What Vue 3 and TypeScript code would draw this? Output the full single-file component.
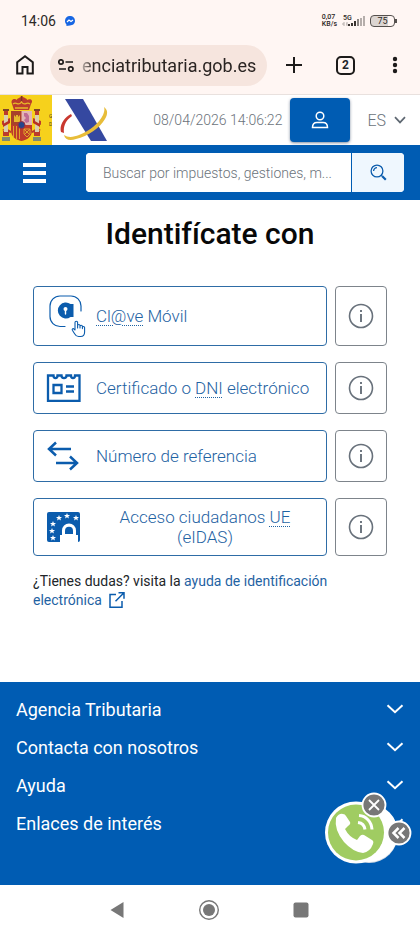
<script setup lang="ts">
import { ref } from 'vue'

interface Method {
  id: string
  before: string
  abbr: string
  title: string
  after: string
  size: string
}

const methods: Method[] = [
  { id: 'clave', before: '', abbr: 'Cl@ve', title: 'Cl@ve', after: ' Móvil', size: 'tall' },
  { id: 'cert', before: 'Certificado o ', abbr: 'DNI', title: 'Documento Nacional de Identidad', after: ' electrónico', size: 'normal' },
  { id: 'ref', before: 'Número de referencia', abbr: '', title: '', after: '', size: 'normal' },
  { id: 'eidas', before: 'Acceso ciudadanos ', abbr: 'UE', title: 'Unión Europea', after: ' (eIDAS)', size: 'centered' },
]

const sections: string[] = ['Agencia Tributaria', 'Contacta con nosotros', 'Ayuda', 'Enlaces de interés']
const stars: number[][] = [[12, 5], [20, 3], [29, 5], [6, 11], [5, 18], [6, 25]]

const query = ref('')
const address = ref('enciatributaria.gob.es')
</script>

<template>
  <div class="screen">
    <div class="status">
      <span class="clock">14:06</span>
      <svg class="messenger" width="10" height="10" viewBox="0 0 10 10">
        <path d="M5 0a4.8 4.8 0 0 1 5 4.7c0 2.8-2.2 4.7-5 4.7L3 9.8l-1.5.1-.1-1.5A4.7 4.7 0 0 1 0 4.7 4.8 4.8 0 0 1 5 0Z" fill="#1766e3" />
        <path d="m2 6 2-2 2 1.5L8 4" fill="none" stroke="#fff" stroke-width="1.2" />
      </svg>
      <span class="speed"><span>0,07</span><span>KB/s</span></span>
      <span class="signal">
        <span class="net">5G</span>
        <svg width="24" height="11" viewBox="0 0 24 11">
          <path d="M1 8h2m0-2v4m2-2h1m0-2v4" stroke="#b5aeab" stroke-width="1" />
          <path d="M8 10V8m3 2V7m3 3V5" stroke="#38322f" stroke-width="2" />
          <path d="M17 10V3m0 7" stroke="#8b8582" stroke-width="2" />
          <path d="M20 10V2m3 8V0" stroke="#b5aeab" stroke-width="2" />
        </svg>
      </span>
      <span class="battery"><span>75</span></span>
    </div>

    <div class="browser">
      <button class="plain" aria-label="Inicio">
        <svg width="18" height="20" viewBox="0 0 18 20" fill="none" stroke="#1d1b1a" stroke-width="2">
          <path d="M1.2 18.5V7.3L9 1.3l7.800 6V18.500H11.500V12H6.500v6.500Z" />
        </svg>
      </button>
      <label class="address">
        <svg width="16" height="13" viewBox="0 0 16 13" fill="none" stroke="#1d1b1a" stroke-width="1.700">
          <circle cx="3" cy="3" r="2.200" /><path d="M7.500 3H15M1 10h7" /><circle cx="12.800" cy="10" r="2.200" />
        </svg>
        <input v-model="address" type="text" aria-label="Dirección web" />
      </label>
      <button class="plain plus" aria-label="Nueva pestaña">
        <svg width="18" height="18" viewBox="0 0 18 18"><path d="M9 1v16M1 9h16" stroke="#1d1b1a" stroke-width="2" /></svg>
      </button>
      <button class="plain tabs" aria-label="Pestañas"><span>2</span></button>
      <button class="plain dots" aria-label="Menú del navegador">
        <svg width="6" height="18" viewBox="0 0 6 18" fill="#1d1b1a"><circle cx="3" cy="3" r="2.200" /><circle cx="3" cy="9" r="2.200" /><circle cx="3" cy="15" r="2.200" /></svg>
      </button>
    </div>

    <header class="site">
      <a class="crest" href="#" aria-label="Gobierno de España">
        <svg width="52" height="50" viewBox="0 0 52 50">
          <rect width="52" height="50" fill="#f6d11c" />
          <g fill="#bb3b2c">
            <path d="M12 9c-2-5 3-6 5-4 0-2 3-2 4-3 0-1 2-1 2 0 1 1 4 1 4 3 3-2 7 0 4 4l-2 6H14Z" />
            <path d="M4 16h4v4H4zM35 16h4v4h-4zM3 36h6v5H3zM34 36h6v5h-6z" />
            <path d="m2 26 8-3v3l-8 4zM41 26l-8-3v3l8 4zM2 35l4-2 5 3v2zM41 35l-4-2-5 3v2z" />
          </g>
          <path d="M4 20h4v17H4zM35 20h4v17h-4z" fill="#d9cfae" />
          <path d="m3 29 7-4v3l-7 4zm37 0-7-4v3l7 4z" fill="#b83124" />
          <path d="M2 42h8v4H2zm31 0h8v4h-8z" fill="#7d8a72" />
          <path d="M11 16h21v19c0 7-5 10-10.500 11C16 45 11 42 11 35Z" fill="#be3b2a" />
          <path d="M11 16h10.500v14H11z" fill="#a8412a" />
          <path d="M21.500 16H32v14H21.500z" fill="#e2b6b4" />
          <path d="M24 18h3l2 3v6l-3 1-2-3 2-2-2-2z" fill="#bf6b94" />
          <path d="M14 27v-7l2 2v-2h2v2l2-2v7z" fill="#e6b72d" />
          <path d="M13.500 31v11m3-11v13m3-11v11" stroke="#e0a52b" />
          <path d="M24 34h6v5l-3 3-3-3zm0 0 6 6m0-6-6 6" stroke="#e0a52b" fill="none" />
          <circle cx="21.500" cy="30" r="3.500" fill="#26458c" stroke="#9a3143" />
          <path d="M13 9c4-3 5 3 8.500-2C25 12 26 6 30 9M15 13h13" fill="none" stroke="#e7b929" stroke-width="1.300" />
          <path d="M21.500 1v5" stroke="#7f3720" stroke-width="1.500" />
          <path d="M3 15h6m25 0h6" stroke="#7e4428" stroke-width="2" />
          <text x="49" y="23" font-size="5" fill="#493e18">G</text>
          <text x="49" y="31" font-size="5" fill="#493e18">D</text>
        </svg>
      </a>
      <a class="logo" href="#" aria-label="Agencia Tributaria">
        <svg width="48" height="44" viewBox="0 0 48 44">
          <path d="M5 1h18l24 42H31Z" fill="#3548a0" />
          <path d="M11 16C4 19-1 28 1 34l3 1C3 28 6 22 12 18Z" fill="#c9382f" />
          <path d="M44 9c4 3 4 7 1 12-5 9-17 17-29 20-6 2-11 1-12-4 4 3 10 2 15 0 11-4 20-12 24-20 1-3 2-5 1-8Z" fill="#e8bd39" />
        </svg>
      </a>
      <time class="date">08/04/2026 14:06:22</time>
      <button class="user" aria-label="Acceder">
        <svg width="18" height="18" viewBox="0 0 18 18" fill="none" stroke="#fff" stroke-width="1.500">
          <circle cx="9" cy="5" r="3.800" /><path d="M1.500 16.500c0-3.500 2-5 4.500-5h6c2.500 0 4.500 1.500 4.500 5Z" />
        </svg>
      </button>
      <button class="plain lang">
        ES
        <svg width="12" height="8" viewBox="0 0 12 8" fill="none" stroke="#5f6872" stroke-width="1.700"><path d="m1 1.200 5 5.200 5-5.200" /></svg>
      </button>
    </header>

    <nav class="bar">
      <button class="plain burger" aria-label="Menú"><i></i><i></i><i></i></button>
      <form class="search" role="search" @submit.prevent>
        <input v-model="query" type="text" placeholder="Buscar por impuestos, gestiones, m..." aria-label="Buscar" />
        <button aria-label="Buscar">
          <svg width="17" height="17" viewBox="0 0 17 17" fill="none" stroke="#0b5cad" stroke-width="1.300">
            <circle cx="7" cy="7" r="5.900" /><path d="M3.600 7A3.400 3.400 0 0 1 7 3.600" /><path d="m11.300 11.300 1.200 1.200" /><path d="m12.300 12.300 3.500 3.500" stroke-width="2.200" />
          </svg>
        </button>
      </form>
    </nav>

    <main>
      <h1>Identifícate con</h1>
      <div class="methods">
        <div v-for="m in methods" :key="m.id" class="row">
          <button class="method" :class="m.size">
            <svg v-if="m.id === 'clave'" class="icon" width="40" height="44" viewBox="0 0 40 44" fill="none" stroke="#0b5cad" stroke-linecap="round" stroke-linejoin="round">
              <path d="M19 32.500h-5a10 10 0 0 1-10-10V12A10 10 0 0 1 14 2h11a10 10 0 0 1 10 10v5" stroke-width="1.200" />
              <path d="M27.500 10v13h-3a8 8 0 1 1 0-13Z" fill="#0b5cad" stroke="none" />
              <circle cx="19.500" cy="15" r="2" fill="#fff" stroke="none" /><path d="M19.500 16v4" stroke="#fff" stroke-width="1.400" />
              <path d="M29 36V28.500a1.300 1.300 0 0 1 2.600 0V34v-2.300a1.200 1.200 0 0 1 2.400 0V34v-1.600a1.200 1.200 0 0 1 2.400 0v2.200-1a1.100 1.100 0 0 1 2.200 0V38c0 3-1.600 4.500-4 4.500h-2c-2 0-3-1-4-2.800l-2.200-3.500c-.7-1.300.9-2.200 1.700-1Z" stroke-width="1.100" />
            </svg>
            <svg v-else-if="m.id === 'cert'" class="icon" width="40" height="30" viewBox="0 0 40 30" fill="none" stroke="#0b5cad" stroke-width="2.300">
              <path d="M2 2.500h5.500c0 3.500 4 3.500 4 0h4c0 3.500 5 3.500 5 0h4.500c0 3.500 4 3.500 4 0h4.500v25.300H2Z" />
              <path d="M7.500 12h8v8h-8zM20 13.500h8M20 18.500h8" />
            </svg>
            <svg v-else-if="m.id === 'ref'" class="icon" width="40" height="30" viewBox="0 0 40 30" fill="none" stroke="#0b5cad" stroke-width="2.500">
              <path d="M25 8H3M10 1.500 3 8l7 6.500M10 22h21M24 15.500l7 6.500-7 6.500" />
            </svg>
            <svg v-else class="icon" width="40" height="30" viewBox="0 0 40 30">
              <rect x="1" width="33" height="30" rx="2" fill="#0b5cad" />
              <path v-for="(s, i) in stars" :key="i" :transform="`translate(${s[0] + 1} ${s[1] + 1})`" fill="#fff" d="m0-3 .8 2H3L1.300.4 2 2.600 0 1.300-2 2.600-1.300.4-3-1h2.200Z" />
              <path d="M14 30v-7h2v-4.500a7 7 0 0 1 14 0V23h2v7Z" fill="#fff" />
              <path d="M19 22v-3.300a4 4 0 0 1 8 0V22Z" fill="#0b5cad" />
            </svg>
            <span class="label">{{ m.before }}<abbr v-if="m.abbr" :title="m.title">{{ m.abbr }}</abbr>{{ m.after }}</span>
          </button>
          <button class="info" aria-label="Información">
            <svg width="26" height="26" viewBox="0 0 26 26" fill="none" stroke="#68717b">
              <circle cx="13" cy="13" r="11.500" stroke-width="1.600" />
              <path d="M13 11v8M13 7v2" stroke-width="1.900" />
            </svg>
          </button>
        </div>
      </div>
      <p class="help">
        ¿Tienes dudas? visita la
        <a href="#">ayuda de identificación electrónica
          <svg width="16" height="16" viewBox="0 0 16 16" fill="none" stroke="#0b5cad" stroke-width="1.500"><path d="M7 2.500H1v12.700h12V9M9.500.8H15v6M15 .8 6.500 9.300" /></svg>
        </a>
      </p>
    </main>

    <footer>
      <button v-for="s in sections" :key="s" class="plain section">
        {{ s }}
        <svg width="18" height="10" viewBox="0 0 18 10" fill="none" stroke="#fff" stroke-width="2"><path d="m1.500 1.200 7.500 7 7.500-7" /></svg>
      </button>
      <div class="call">
        <button class="plain phone" aria-label="Llamar">
          <svg width="78" height="64" viewBox="0 0 78 64">
            <circle cx="44" cy="33" r="29" fill="#d5dce5" />
            <circle cx="44" cy="32" r="29" fill="#fff" />
            <circle cx="31" cy="31.500" r="31" fill="#fff" />
            <circle cx="31" cy="31.500" r="28" fill="#a0cc62" />
            <path d="M11 17Q14 12 18 13 20 13 21 15L25 21Q26 23 23 25L20 28Q24 36 32 39L35 35Q37 33 39 34L47 39Q49 40 48 43 45 51 38 52 28 51 19 41 9 29 11 17Z" fill="#fff" />
            <path d="M33 21.500c4 .5 6.500 3 7 7M34 14.500c7 .5 12.500 6 13 14" fill="none" stroke="#fff" stroke-width="3" />
          </svg>
        </button>
        <button class="plain close" aria-label="Cerrar">
          <svg width="26" height="26" viewBox="0 0 26 26"><circle cx="13" cy="13" r="11.500" fill="#777" stroke="#fff" stroke-width="1.800" /><path d="m8 8 10 10M18 8 8 18" stroke="#fff" stroke-width="1.800" /></svg>
        </button>
        <button class="plain collapse" aria-label="Contraer">
          <svg width="26" height="26" viewBox="0 0 26 26"><circle cx="13" cy="13" r="11.500" fill="#777" stroke="#fff" stroke-width="1.800" /><path d="m12.500 8-5 5 5 5M18.500 8l-5 5 5 5" fill="none" stroke="#fff" stroke-width="2.500" /></svg>
        </button>
      </div>
    </footer>

    <div class="system">
      <button class="plain" aria-label="Atrás"><svg width="22" height="22" viewBox="0 0 22 22"><path d="M17.500 3v16L4.500 11Z" fill="#777" /></svg></button>
      <button class="plain" aria-label="Inicio del teléfono"><svg width="22" height="22" viewBox="0 0 22 22"><circle cx="11" cy="11" r="9.300" fill="none" stroke="#777" stroke-width="1.400" /><circle cx="11" cy="11" r="6" fill="#777" /></svg></button>
      <button class="plain" aria-label="Recientes"><svg width="22" height="22" viewBox="0 0 22 22"><rect x="3.500" y="3.500" width="15" height="15" rx="2" fill="#777" /></svg></button>
    </div>
  </div>
</template>

<style>
body {
  margin: 0;
  background: #fff;
}
</style>

<style scoped>
.screen {
  display: flex;
  flex-direction: column;
  min-height: 100vh;
  font-family: Roboto, "Liberation Sans", sans-serif;
  color: #212529;
}
* {
  box-sizing: border-box;
}
svg {
  display: block;
  flex: none;
}
button,
input {
  font: inherit;
  margin: 0;
}
button {
  cursor: pointer;
}
a {
  color: #1f63a3;
  text-decoration: none;
}
.plain {
  display: flex;
  align-items: center;
  padding: 0;
  border: 0;
  background: none;
  color: inherit;
}
.status {
  display: flex;
  align-items: center;
  height: 42px;
  padding: 0 25px 0 21px;
  background: #fff6f3;
  color: #2c2826;
}
.clock {
  font-size: 14px;
}
.messenger {
  margin-left: 9px;
}
.speed {
  display: flex;
  flex-direction: column;
  margin-left: auto;
  font-size: 7px;
  font-weight: 500;
  line-height: 7px;
}
.signal {
  display: grid;
  margin: 0 5px 0 4px;
}
.signal > * {
  grid-area: 1 / 1;
}
.net {
  font-size: 7px;
  line-height: 7px;
  font-weight: 500;
  padding-left: 2px;
  margin-top: -1px;
}
.battery {
  position: relative;
  width: 25px;
  height: 12px;
  border: 1px solid #55504d;
  border-radius: 4px;
  background: linear-gradient(90deg, #dcd5d1 75%, #fff6f3 75%);
  font-size: 9px;
  line-height: 10px;
  text-align: center;
}
.battery::after {
  content: "";
  position: absolute;
  top: 3px;
  right: -3px;
  width: 2px;
  height: 4px;
  background: #55504d;
}
.browser {
  display: flex;
  align-items: center;
  height: 53px;
  padding: 0 22px 6px 16px;
  border-bottom: 1px solid #e9e1de;
  background: #fff6f3;
}
.address {
  display: flex;
  flex: 1;
  align-items: center;
  gap: 8px;
  min-width: 0;
  height: 41px;
  margin-left: 16px;
  padding: 0 8px;
  border-radius: 21px;
  background: #f6e5de;
}
.address input {
  flex: 1;
  min-width: 0;
  padding: 0;
  border: 0;
  outline: 0;
  background: none;
  color: #2a2422;
  font-size: 18px;
  mask-image: linear-gradient(90deg, rgba(0, 0, 0, 0.3), #000 12px);
}
.plus {
  margin-left: 18px;
}
.tabs {
  justify-content: center;
  width: 19px;
  height: 19px;
  margin-left: 33px;
  border: 2px solid #1d1b1a;
  border-radius: 5px;
  font-size: 12px;
  font-weight: 700;
}
.dots {
  margin-left: 37px;
}
.site {
  display: flex;
  align-items: center;
  height: 50px;
  padding-right: 14px;
}
.logo {
  margin-left: 8px;
}
.date {
  margin-left: auto;
  color: #6b737b;
  font-size: 14px;
  font-weight: 300;
}
.user {
  display: grid;
  place-items: center;
  width: 60px;
  height: 44px;
  margin-left: 8px;
  border: 0;
  border-radius: 4px;
  background: #005cb3;
  box-shadow: 0 1px 3px rgba(0, 30, 70, 0.5);
}
.lang {
  gap: 8px;
  margin-left: 17px;
  color: #6b737b;
  font-size: 16px;
  font-weight: 300;
}
.bar {
  display: flex;
  align-items: center;
  justify-content: space-between;
  gap: 40px;
  height: 55px;
  padding: 0 16px 0 23px;
  background: #005cb3;
}
.burger {
  flex-direction: column;
  gap: 4px;
}
.burger i {
  width: 23px;
  height: 4px;
  background: #fff;
}
.search {
  display: flex;
  flex: 1;
  height: 39px;
  overflow: hidden;
  border-radius: 4px;
  background: #fff;
}
.search input {
  flex: 1;
  min-width: 0;
  padding: 0 0 0 17px;
  border: 0;
  outline: 0;
  background: #fff;
  font-size: 14px;
  font-weight: 300;
}
.search input::placeholder {
  color: #6b737b;
  opacity: 1;
}
.search button {
  display: grid;
  place-items: center;
  width: 53px;
  border: 0;
  border-left: 1px solid #005cb3;
  background: #eff7fe;
}
main {
  flex: 1;
  padding: 0 33px;
}
h1 {
  margin: 16px 0 34px;
  color: #080808;
  font-size: 30px;
  font-weight: 500;
  line-height: 36px;
  text-align: center;
}
.methods {
  display: grid;
  gap: 16px;
}
.row {
  display: flex;
  gap: 8px;
}
.method {
  display: flex;
  flex: 1;
  align-items: center;
  min-width: 0;
  min-height: 52px;
  padding: 0 12px;
  border: 1px solid #2e6ca6;
  border-radius: 4px;
  background: #fff;
  color: #1f63a3;
  font-size: 17px;
  font-weight: 300;
  line-height: 20px;
  text-align: left;
}
.tall {
  min-height: 60px;
}
.centered {
  min-height: 58px;
}
.centered .label {
  flex: 1;
  padding: 0 16px;
  text-align: center;
}
.icon {
  margin-right: 10px;
}
abbr {
  text-decoration: underline dotted;
  text-decoration-thickness: 1px;
  text-underline-offset: 3px;
}
.info {
  display: grid;
  place-items: center;
  width: 52px;
  padding: 0;
  border: 1px solid #7d848b;
  border-radius: 4px;
  background: #fff;
}
.help {
  margin: 16px 0 72px;
  font-size: 14px;
  line-height: 19px;
}
.help svg {
  display: inline-block;
  margin-left: 4px;
  vertical-align: text-bottom;
}
footer {
  position: relative;
  min-height: 203px;
  padding: 8px 16px;
  background: #005cb3;
  color: #fff;
}
.section {
  justify-content: space-between;
  width: 100%;
  height: 38px;
  font-size: 18px;
}
.call {
  position: absolute;
  right: 8px;
  bottom: 20px;
  width: 87px;
  height: 73px;
}
.phone {
  position: absolute;
  left: 0;
  bottom: 0;
}
.close {
  position: absolute;
  top: 0;
  left: 36px;
}
.collapse {
  position: absolute;
  top: 28px;
  right: 0;
}
.system {
  display: flex;
  align-items: center;
  justify-content: center;
  gap: 70px;
  height: 49px;
  padding-right: 3px;
  background: #fff;
}
</style>
